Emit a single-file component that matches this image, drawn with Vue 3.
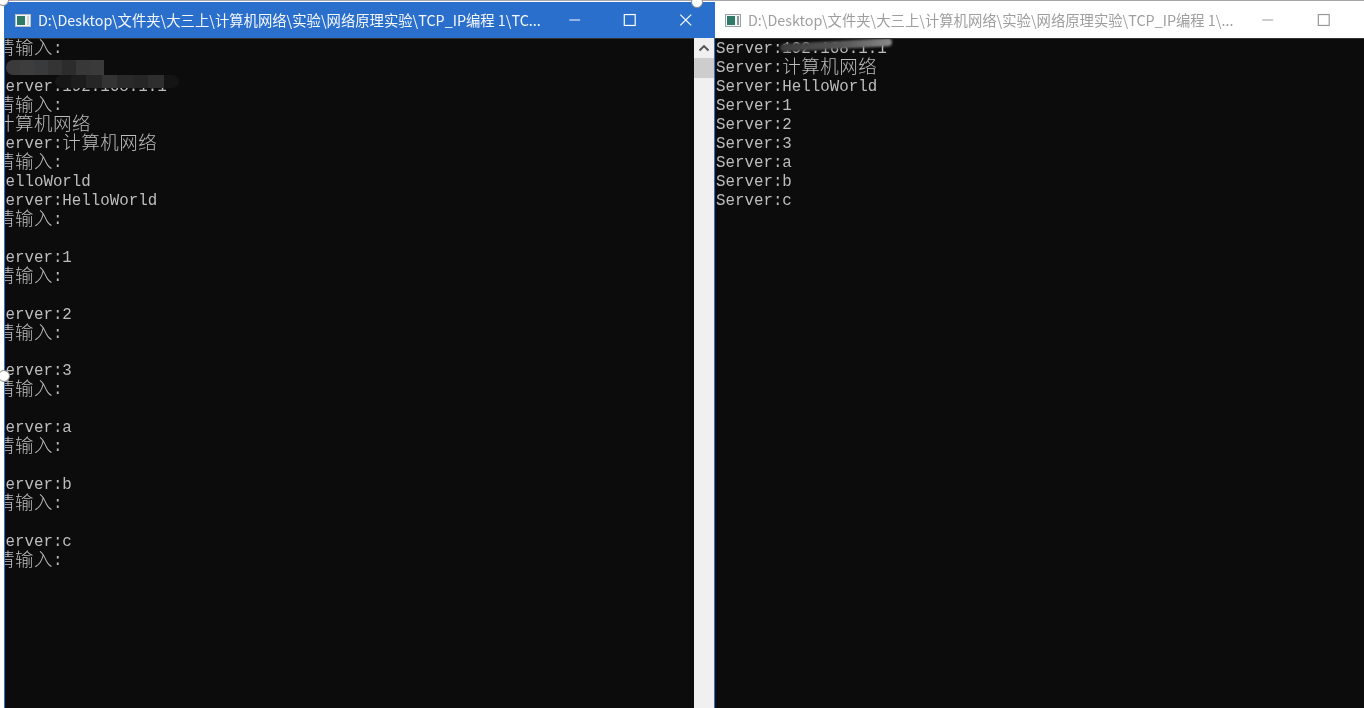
<script setup>
const ask = '请输入:'
const leftLines = [
  ask, '', 'Server:192.168.1.1', ask, '计算机网络', 'Server:计算机网络', ask, 'HelloWorld', 'Server:HelloWorld',
  ask, '1', 'Server:1', ask, '2', 'Server:2', ask, '3', 'Server:3', ask, 'a', 'Server:a', ask, 'b', 'Server:b', ask, 'c', 'Server:c', ask
]
const rightLines = ['Server:192.168.1.1', 'Server:计算机网络', 'Server:HelloWorld', 'Server:1', 'Server:2', 'Server:3', 'Server:a', 'Server:b', 'Server:c']
const parts = (s) => s.match(/[\u4e00-\u9fff]+|[^\u4e00-\u9fff]+/g) || []
const isCjk = (s) => /[\u4e00-\u9fff]/.test(s)
const mosaicA = ['#3a3a3a', '#3d3d3d', '#383a3c', '#343434', '#2c2c2c', '#383838', '#3a3a3a']
const mosaicB = ['#161616', '#1c1c1c', '#262626', '#333333', '#2a2a2a', '#262626', '#2e2e2e', '#141414']
const title = 'D:\\Desktop\\文件夹\\大三上\\计算机网络\\实验\\网络原理实验\\TCP_IP编程 1\\'
</script>

<template>
  <div class="screen">
    <div class="gutter"></div>

    <section class="window left">
      <header class="bar active">
        <svg class="app-icon" viewBox="0 0 16 13"><rect x="0.5" y="0.5" width="15" height="12" fill="#f4f4f4" stroke="#b9c4c8"/><rect x="2" y="2" width="8" height="9" fill="#2f7a66"/><rect x="12" y="2" width="2" height="9" fill="#cfd8d8"/></svg>
        <span class="title">{{ title }}TC...</span>
        <div class="controls">
          <svg viewBox="0 0 56 36"><path d="M22.500 18h11" stroke="currentColor" fill="none"/></svg>
          <svg viewBox="0 0 56 36"><rect x="22.500" y="12.500" width="11" height="11" stroke="currentColor" stroke-width="1.200" fill="none"/></svg>
          <svg viewBox="0 0 56 36"><path d="M22.500 12.500l11 11M33.500 12.500l-11 11" stroke="currentColor" stroke-width="1.200" fill="none"/></svg>
        </div>
      </header>
      <div class="client">
        <div class="console clipped">
          <div v-for="(line, i) in leftLines" :key="i" class="line"><span v-for="(p, j) in parts(line)" :key="j" :class="{ cjk: isCjk(p) }">{{ p }}</span></div>
          <div class="mosaic m-a"><i v-for="(c, i) in mosaicA" :key="i" :style="{ background: c }"></i></div>
          <div class="mosaic m-b"><i v-for="(c, i) in mosaicB" :key="i" :style="{ background: c }"></i></div>
        </div>
        <aside class="scrollbar">
          <svg viewBox="0 0 20 20"><path d="M5.500 12.500L10 8l4.500 4.500" fill="none" stroke="#505050" stroke-width="1.800"/></svg>
          <div class="thumb"></div>
        </aside>
      </div>
    </section>

    <section class="window right">
      <header class="bar inactive">
        <svg class="app-icon" viewBox="0 0 16 13"><rect x="0.5" y="0.5" width="15" height="12" fill="#f4f4f4" stroke="#9aa4a8"/><rect x="2" y="2" width="8" height="9" fill="#2f7a66"/><rect x="12" y="2" width="2" height="9" fill="#8f9a9a"/></svg>
        <span class="title">{{ title }}...</span>
        <div class="controls">
          <svg viewBox="0 0 56 36"><path d="M22.500 18h11" stroke="currentColor" fill="none"/></svg>
          <svg viewBox="0 0 56 36"><rect x="22.500" y="12.500" width="11" height="11" stroke="currentColor" stroke-width="1.200" fill="none"/></svg>
        </div>
      </header>
      <div class="console indented">
        <div v-for="(line, i) in rightLines" :key="i" class="line"><span v-for="(p, j) in parts(line)" :key="j" :class="{ cjk: isCjk(p) }">{{ p }}</span></div>
        <div class="smear"></div>
      </div>
    </section>

    <span class="handle h1"></span>
    <span class="handle h2"></span>
    <span class="handle h3"></span>
  </div>
</template>

<style scoped>
.screen {
  position: relative;
  display: flex;
  width: 1364px;
  height: 708px;
  overflow: hidden;
  background: #fff;
  font-family: "Noto Sans CJK SC", "Noto Sans", sans-serif;
}
.gutter { width: 4px; flex: none; }
.window {
  display: flex;
  flex-direction: column;
  height: 708px;
  padding-top: 1px;
  box-sizing: border-box;
  border-top: 1px solid #a6a6ac;
}
.left { width: 711px; flex: none; border-left: 1px solid #2f6fc6; }
.right { flex: 1; min-width: 0; }
.bar {
  display: flex;
  align-items: center;
  height: 36px;
  flex: none;
  box-sizing: border-box;
}
.active { background: #2b6fcd; color: #fff; padding: 0 2px 0 10px; }
.inactive { background: #fff; color: #999; padding: 0 13px 0 10px; }
.app-icon { width: 16px; height: 13px; flex: none; }
.title {
  flex: 1;
  min-width: 0;
  margin: -2px 0 0 7px;
  font-size: 14.350px;
  white-space: nowrap;
  overflow: hidden;
  filter: blur(0.3px);
  opacity: .95;
}
.controls { display: flex; flex: none; }
.controls svg { width: 55.500px; height: 36px; }
.client { display: flex; flex: 1; min-height: 0; }
.console {
  position: relative;
  flex: 1;
  min-width: 0;
  overflow: hidden;
  background: #0c0c0c;
  color: #bdbdbd;
  font-family: "Liberation Mono", "Noto Sans CJK SC", monospace;
  font-size: 15.800px;
  border-top: 1px solid #333;
}
.clipped { text-indent: -9px; }
.indented { padding-left: 1px; }
.line { height: 19px; line-height: 19px; white-space: pre; filter: blur(0.4px); position: relative; top: 1px; }
.clipped .line { height: 18.970px; }
.cjk {
  font-family: "Noto Sans CJK SC", sans-serif;
  font-size: 18.500px;
  letter-spacing: 0.500px;
  font-weight: 300;
  line-height: 0;
  position: relative;
  top: 1px;
}
.scrollbar { width: 20px; flex: none; background: #f0f0f0; border-right: 1px solid #2f6fc6; }
.scrollbar svg { display: block; width: 20px; height: 20px; }
.thumb { height: 20px; background: #cdcdcd; }
.mosaic { position: absolute; display: flex; filter: blur(0.6px); text-indent: 0; }
.mosaic i { display: block; width: 14px; height: 15px; }
.m-a { left: 1px; top: 21px; }
.m-a i:first-child { border-radius: 7px 0 0 7px; }
.m-b { left: 50px; top: 36px; }
.m-b i { width: 15.500px; height: 13px; }
.m-b i:first-child { border-radius: 7px 0 0 7px; }
.m-b i:last-child { border-radius: 0 7px 7px 0; }
.smear {
  position: absolute;
  left: 65px;
  top: 2px;
  width: 112px;
  height: 8px;
  background: linear-gradient(90deg, #3c3c3c, #555 55%, #8a8a8a);
  filter: blur(1.200px);
  border-radius: 5px;
  transform: rotate(-3deg);
}
.handle {
  position: absolute;
  width: 10px;
  height: 10px;
  background: #fff;
  border: 1px solid #8a8a8a;
  border-radius: 50%;
}
.h1 { left: -3px; top: -6px; }
.h2 { left: -2px; top: 370px; }
.h3 { left: 691px; top: -4px; }
</style>
